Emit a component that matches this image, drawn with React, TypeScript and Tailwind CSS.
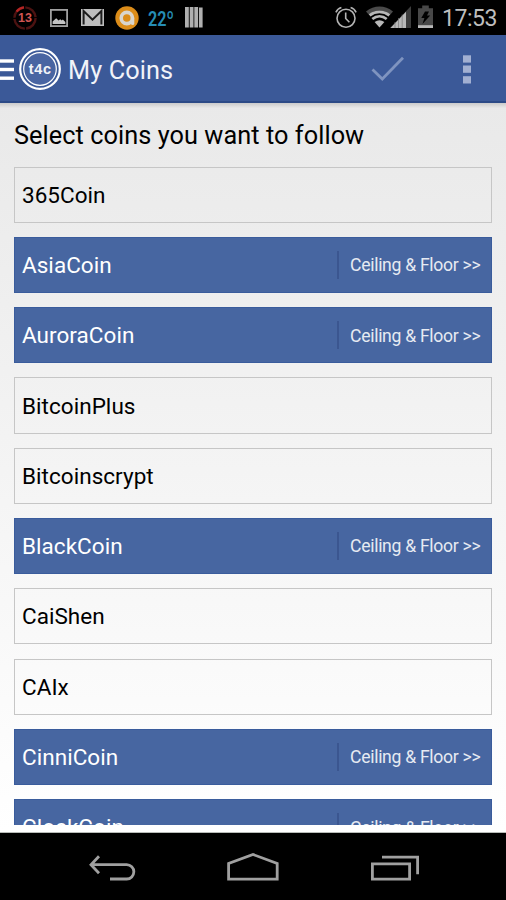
import type { ReactNode } from 'react'

type Coin = { name: string; followed?: boolean }

const coins: Coin[] = [
  { name: '365Coin' },
  { name: 'AsiaCoin', followed: true },
  { name: 'AuroraCoin', followed: true },
  { name: 'BitcoinPlus' },
  { name: 'Bitcoinscrypt' },
  { name: 'BlackCoin', followed: true },
  { name: 'CaiShen' },
  { name: 'CAIx' },
  { name: 'CinniCoin', followed: true },
  { name: 'ClockCoin', followed: true },
]

function StatusBar() {
  return (
    <div className="flex h-[35px] shrink-0 items-start bg-black">
      {/* Notifications */}
      <svg className="ml-[13px] mt-[6px] shrink-0" width="24" height="24" viewBox="0 0 24 24" fill="none">
        <circle cx="12" cy="12" r="10.6" stroke="#4c1211" strokeWidth="2.4" strokeDasharray="15.4 1.25" />
        <path d="M3.6 5.6A10.6 10.6 0 0 1 11 1.4" stroke="#b52524" strokeWidth="2.4" />
        <text x="11.9" y="16.2" textAnchor="middle" fontSize="12.5" fontFamily="'Liberation Sans', sans-serif" fontWeight="700" fill="#cf5552">13</text>
      </svg>
      <svg className="ml-[13px] mt-[9px] shrink-0" width="18" height="18" viewBox="0 0 18 18">
        <rect x="0.9" y="0.9" width="16.2" height="16.2" fill="none" stroke="#a0a0a0" strokeWidth="1.8" />
        <path d="M2.6 15v-2.6l3.6-3.2 2.4 2.2 1.6-1.2 1.6 1.2 1-.8 2.6 2.4V15z" fill="#c4c4c4" />
      </svg>
      <svg className="ml-[13px] mt-[9px] shrink-0" width="23" height="17" viewBox="0 0 23 17">
        <rect width="23" height="17" fill="#bdbdbd" />
        <path d="M2.6 15.4V2l8.9 8.6L20.4 2v13.4" fill="none" stroke="#1c1c1c" strokeWidth="2" />
      </svg>
      <svg className="ml-[11px] mt-[6px] shrink-0" width="24" height="24" viewBox="0 0 24 24" fill="none">
        <circle cx="12" cy="12" r="11.7" fill="#db8c19" />
        <circle cx="11.8" cy="12" r="5.6" stroke="#d9d5cd" strokeWidth="3.6" />
        <path d="M17.6 12v5.4" stroke="#d9d5cd" strokeWidth="3.4" strokeLinecap="round" />
        <circle cx="11.8" cy="12.4" r="2.5" fill="#db8c19" />
      </svg>
      <span className="ml-[9px] mt-[6px] w-[28px] shrink-0 origin-left scale-x-[0.77] whitespace-nowrap text-[21px] font-semibold leading-[26px] text-[#268db5]">22º</span>
      <svg className="ml-[9px] mt-[7px] shrink-0" width="18" height="21" viewBox="0 0 18 21" fill="#b0b0b0">
        <rect x="0" y="0" width="3.8" height="20.5" />
        <rect x="4.7" y="0" width="3.8" height="20.5" />
        <rect x="9.3" y="0" width="3.8" height="20.5" />
        <rect x="14" y="0.5" width="3.6" height="20" />
      </svg>

      {/* System */}
      <svg className="ml-auto mt-[6px] shrink-0" width="22" height="23" viewBox="0 0 22 23" fill="none" stroke="#b3b3b3" strokeWidth="1.6">
        <circle cx="11" cy="12.3" r="9" />
        <path d="M10.7 6.5v6l3.7 3.7" />
        <path d="M.9 6.4C1.8 4.2 3.6 2.3 6.4 1.5M21.1 6.4C20.2 4.2 18.4 2.3 15.6 1.5" />
      </svg>
      <svg className="ml-[9px] mt-[5px] shrink-0" width="46" height="23" viewBox="0 0 46 23">
        <path d="M0 6.4C8-.2 19-.2 27 6.4L24.4 9.5C17.5 4.2 9.5 4.2 2.6 9.5z" fill="#4a4a4a" />
        <g fill="none" stroke="#b8b8b8" strokeWidth="2.8">
          <path d="M3.6 10.3c6-4.6 13.8-4.6 19.8 0" />
          <path d="M6.3 14c4.4-3.5 10-3.5 14.4 0" />
        </g>
        <path d="M8.6 16.9q4.9-3.2 9.8 0L13.5 22.4z" fill="#b8b8b8" />
        <path d="M24 23L45 1v22z" fill="#3d3d3d" />
        <path d="M24.5 23L40 6.7V23z" fill="#b8b8b8" />
        <path d="M29 17v6M32.5 13v10M36.2 9.5V23" stroke="#777" strokeWidth="0.7" />
      </svg>
      <svg className="ml-[6px] mt-[5px] shrink-0" width="15" height="23" viewBox="0 0 15 23">
        <path d="M4.2 0.6h6.6v2.6H15V23H0V3.2h4.2z" fill="#484848" />
        <rect y="20.2" width="15" height="2.8" fill="#b8b8b8" />
        <path d="M7 6.5h4L9 10.6h3.2L4.5 19l1.9-6H3.3z" fill="#000" />
      </svg>
      <span className="ml-[9px] mr-[9px] mt-[4px] w-[55px] shrink-0 whitespace-nowrap text-[23px] leading-[29px] tracking-[-0.45px] text-[#bebebe]">17:53</span>
    </div>
  )
}

function ActionBar() {
  return (
    <header className="flex h-[68px] shrink-0 items-center border-b-2 border-[#2c4a86] bg-[#3b5998] pt-[2px]">
      <svg className="mt-px shrink-0" width="14" height="22" viewBox="0 0 14 22" fill="#fff">
        <rect y="0.3" width="14" height="3.4" />
        <rect y="8.8" width="14" height="3.4" />
        <rect y="17.5" width="14" height="3.4" />
      </svg>
      <svg className="ml-[5px] shrink-0" width="42" height="42" viewBox="0 0 42 42" fill="none">
        <circle cx="21" cy="21" r="19.8" stroke="#fff" strokeWidth="2.2" />
        <circle cx="21" cy="21" r="16.3" fill="#4965a2" stroke="#fff" strokeWidth="1.2" />
        <text x="21.2" y="25.5" textAnchor="middle" fontSize="14.5" fontWeight="700" letterSpacing="0.7" fontFamily="'Liberation Sans', sans-serif" fill="#f1f3f8">t4c</text>
      </svg>
      <h1 className="ml-[7px] mt-[3px] whitespace-nowrap text-[25.3px] leading-[30px] tracking-[0.1px] text-[#f1f3f8]">My Coins</h1>
      <svg className="ml-auto mr-[58px] shrink-0" width="34" height="26" viewBox="0 0 34 26" fill="none">
        <path d="M1.5 13.5L11.3 23 32 1.8" stroke="#7f94c0" strokeWidth="2.8" />
      </svg>
      <svg className="mr-[35px] shrink-0" width="8" height="29" viewBox="0 0 8 29" fill="#a2b0d2">
        <rect y="0.3" width="8" height="7.3" />
        <rect y="10.5" width="8" height="7.3" />
        <rect y="21.2" width="8" height="7.3" />
      </svg>
    </header>
  )
}

function CoinRow({ name, followed }: Coin) {
  if (!followed) {
    return (
      <li className="flex h-[56.2px] shrink-0 items-center border border-[#c6c6c6] pl-[7px] text-black">
        <span className="text-[22.5px] leading-[28px] tracking-[0.04px]">{name}</span>
      </li>
    )
  }

  return (
    <li className="flex h-[56.2px] shrink-0 items-center justify-between border border-[#3a5c9c] bg-[#4766a1] pl-[7px] pr-[10px] text-white">
      <span className="text-[22.5px] leading-[28px] tracking-[0.04px]">{name}</span>
      <span className="flex h-[28px] w-[144px] items-center whitespace-nowrap border-l-2 border-[#3b5690] pl-[11px] pt-px text-[17.6px] tracking-[-0.3px] text-[#e6eaf2]">
        Ceiling &amp; Floor &gt;&gt;
      </span>
    </li>
  )
}

function NavButton({ children, width }: { children: ReactNode; width: number }) {
  return (
    <svg className="shrink-0" width={width} height="28" viewBox={`0 0 ${width} 28`} fill="none" stroke="#a0a0a0" strokeWidth="2.8">
      {children}
    </svg>
  )
}

export default function App() {
  return (
    <div className="flex h-[900px] w-[506px] flex-col overflow-hidden bg-black font-[Roboto,sans-serif]">
      <StatusBar />
      <ActionBar />

      <main className="flex min-h-0 flex-1 flex-col bg-linear-to-b from-[#e9e9e9] to-white px-[14px] pb-[7px]">
        <div className="-mx-[14px] h-[5px] shrink-0 bg-linear-to-b from-[#cbcbcb] to-[#e8e8e8]" />
        <h2 className="mt-[12px] h-[46.6px] shrink-0 whitespace-nowrap text-[25.3px] leading-[32px] tracking-[0.06px] text-black">Select coins you want to follow</h2>
        <ul className="flex min-h-0 flex-1 flex-col gap-[14.1px] overflow-hidden">
          {coins.map((coin) => (
            <CoinRow key={coin.name} {...coin} />
          ))}
        </ul>
      </main>

      <nav className="flex h-[68px] shrink-0 items-start border-t border-[#b8bcb8] pl-[89px] pt-[20px]">
        <NavButton width={48}>
          <path d="M10 3.2L2 11.7l8 8.5M2.5 11.7h35.2a7 7 0 0 1 0 14.3H21" />
        </NavButton>
        <div className="ml-[90px] flex">
          <NavButton width={52}>
            <path d="M1.6 26.2V10.5L26 1.5l24.2 9v15.7z" />
          </NavButton>
        </div>
        <div className="ml-[92px] flex">
          <NavButton width={49}>
            <path d="M1.4 10.8h37.2v15.4H1.4zM11 4.2h35.6v17" />
          </NavButton>
        </div>
      </nav>
    </div>
  )
}
